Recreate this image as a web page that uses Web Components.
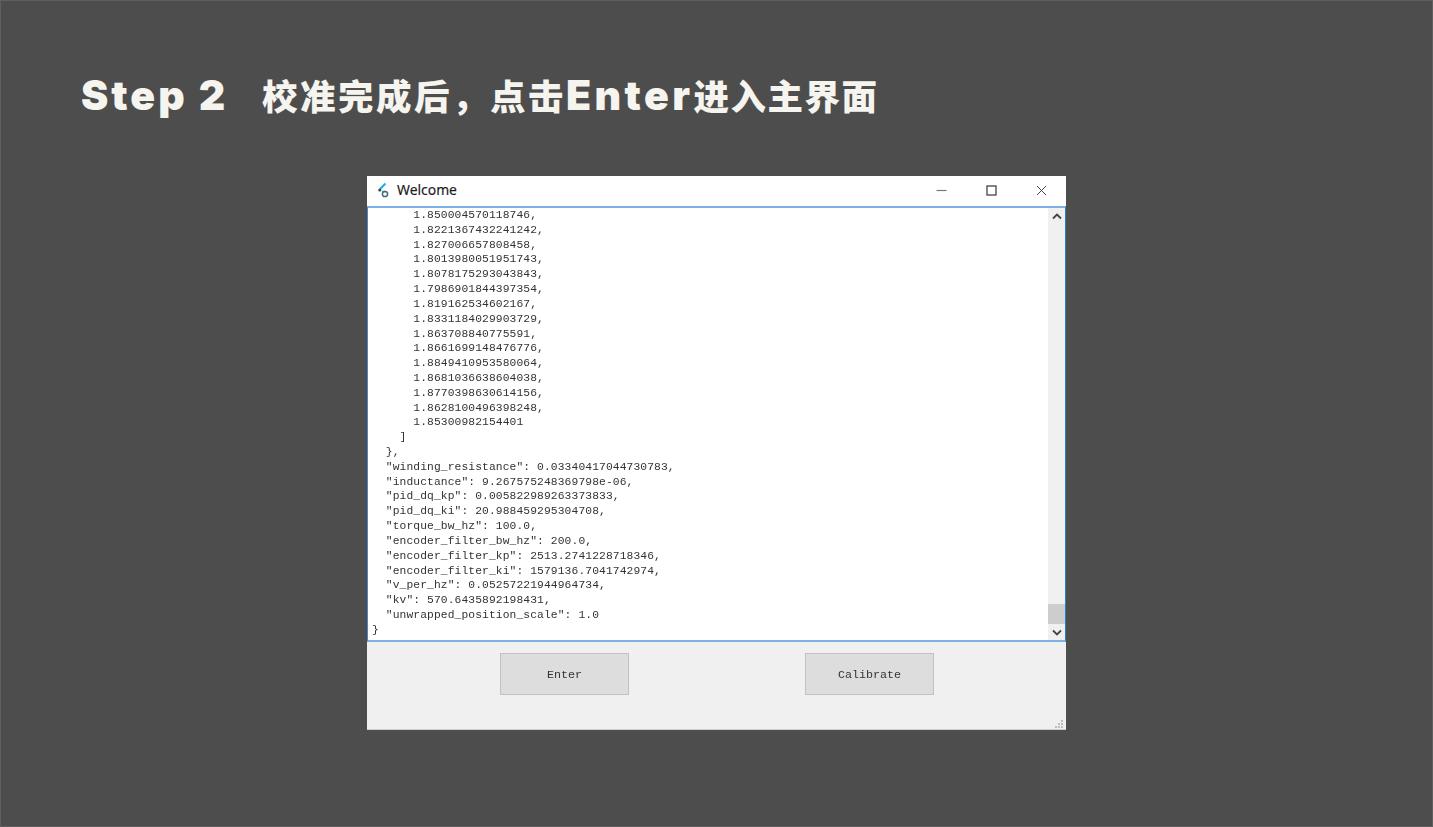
<!DOCTYPE html>
<html><head><meta charset="utf-8"><style>
html,body{margin:0;height:100%}
body{background:#4d4d4d}
</style></head><body>
<step-page></step-page>
<script>
const mono='"Liberation Mono","Noto Sans CJK SC",monospace';
class StepPage extends HTMLElement{constructor(){super();this.attachShadow({mode:'open'}).innerHTML=`<style>
:host{display:flex;flex-direction:column;box-sizing:border-box;width:1433px;height:827px;border:1px solid #5f5f5f;background:#4d4d4d;overflow:hidden}
h1{margin:0;padding:72px 0 0 80px;height:103px;box-sizing:content-box;font:900 41px/44px Inter,"Noto Sans CJK SC",sans-serif;color:#f5f4ee;white-space:nowrap;display:flex;align-items:flex-start}
.s{letter-spacing:3px;width:181px}
.c{font-family:"Noto Sans CJK SC",sans-serif;font-weight:900;font-size:35.5px;letter-spacing:2.5px}
.c2{letter-spacing:1.5px}
.e{letter-spacing:3.4px}
section{padding-left:366px}
</style><h1><span class="s">Step 2</span><span class="c">校准完成后，点击</span><span class="e">Enter</span><span class="c c2">进入主界面</span></h1><section><app-window></app-window></section>`}}
class AppWindow extends HTMLElement{constructor(){super();this.attachShadow({mode:'open'}).innerHTML=`<style>
:host{display:flex;flex-direction:column;box-sizing:border-box;width:699px;height:554px;background:#f0f0f0;position:relative;border-bottom:1px solid #cfcfcf}
.bar{box-sizing:border-box;height:30px;padding:0 0 2px 10px;background:#fff;display:flex;align-items:center;flex:none;font:400 13.9px/16px "Noto Sans",sans-serif;color:#1a1a1a;-webkit-text-stroke:.15px #1a1a1a}
.bar svg.logo{margin-right:6px}
.sp{flex:1}
.ctl{width:50px;height:28px;display:flex;align-items:center;justify-content:center}
.btns{display:flex;justify-content:flex-start;padding:11px 0 0 133px;gap:176px}
</style>
<div class="bar"><svg class="logo" width="14" height="16" viewBox="0 0 14 16"><path d="M8.5 1.5L3 7" stroke="#18b4e6" stroke-width="2.2" fill="none"/><circle cx="2.8" cy="8" r="1.6" fill="#3a4a55"/><path d="M5 9.5L8.5 9.5" stroke="#18b4e6" stroke-width="1.4"/><circle cx="8" cy="12" r="2.6" fill="none" stroke="#4a6a7a" stroke-width="1.5"/></svg>Welcome<span class="sp"></span>
<span class="ctl"><svg width="11" height="11"><path d="M0.5 5.5H10.5" stroke="#777" stroke-width="1.2"/></svg></span>
<span class="ctl"><svg width="11" height="11"><rect x="1" y="1" width="9" height="9" fill="none" stroke="#444" stroke-width="1.3"/></svg></span>
<span class="ctl"><svg width="11" height="11"><path d="M1 1L10 10M10 1L1 10" stroke="#444" stroke-width="1"/></svg></span></div>
<log-view></log-view>
<div class="btns"><tk-button>Enter</tk-button><tk-button>Calibrate</tk-button></div>
<size-grip></size-grip>`}}
class LogView extends HTMLElement{constructor(){super();const t=`      1.850004570118746,
      1.8221367432241242,
      1.827006657808458,
      1.8013980051951743,
      1.8078175293043843,
      1.7986901844397354,
      1.819162534602167,
      1.8331184029903729,
      1.863708840775591,
      1.8661699148476776,
      1.8849410953580064,
      1.8681036638604038,
      1.8770398630614156,
      1.8628100496398248,
      1.85300982154401
    ]
  },
  "winding_resistance": 0.03340417044730783,
  "inductance": 9.267575248369798e-06,
  "pid_dq_kp": 0.005822989263373833,
  "pid_dq_ki": 20.988459295304708,
  "torque_bw_hz": 100.0,
  "encoder_filter_bw_hz": 200.0,
  "encoder_filter_kp": 2513.2741228718346,
  "encoder_filter_ki": 1579136.7041742974,
  "v_per_hz": 0.05257221944964734,
  "kv": 570.6435892198431,
  "unwrapped_position_scale": 1.0
}`;
this.attachShadow({mode:'open'}).innerHTML=`<style>
:host{display:flex;flex:none;height:436px;box-sizing:border-box;border:solid #7db1e4;border-width:2px 1px;border-left-color:#3f8ad0;border-right-color:#2f7fc8;background:#fff;overflow:hidden}
pre{flex:1;margin:0;padding:0 0 0 4px;font:11.3px/14.82px ${mono};letter-spacing:.1px;color:#333;filter:blur(.35px);overflow:hidden}
.sb{width:17px;flex:none;background:#f0f0f0;display:flex;flex-direction:column;align-items:center}
.ar{height:16px;width:17px;display:flex;align-items:center;justify-content:center;flex:none}
.tr{flex:1;display:flex;flex-direction:column;justify-content:flex-end;width:100%}
.th{height:20px;background:#cdcdcd;width:100%}
</style><pre>${t}</pre><div class="sb"><div class="ar"><svg width="10" height="7"><path d="M1 5.5L5 1.5L9 5.5" fill="none" stroke="#444" stroke-width="1.8"/></svg></div><div class="tr"><div class="th"></div></div><div class="ar"><svg width="10" height="7"><path d="M1 1.5L5 5.5L9 1.5" fill="none" stroke="#444" stroke-width="1.8"/></svg></div></div>`}}
class TkButton extends HTMLElement{constructor(){super();this.attachShadow({mode:'open'}).innerHTML=`<style>
:host{display:flex;align-items:center;justify-content:center;box-sizing:border-box;width:129px;height:42px;padding-top:1px;background:#dddddd;border:1px solid #c2c2c2;font:11.7px ${mono};color:#333}
span{filter:blur(.3px)}
</style><span><slot></slot></span>`}}
class SizeGrip extends HTMLElement{constructor(){super();this.attachShadow({mode:'open'}).innerHTML=`<style>
:host{position:absolute;right:3px;bottom:1px;width:8px;height:8px;display:block}
svg{display:block}
</style><svg width="8" height="8" fill="#bdbdbd"><rect x="6" y="0" width="2" height="2"/><rect x="3" y="3" width="2" height="2"/><rect x="6" y="3" width="2" height="2"/><rect x="0" y="6" width="2" height="2"/><rect x="3" y="6" width="2" height="2"/><rect x="6" y="6" width="2" height="2"/></svg>`}}
customElements.define('step-page',StepPage);customElements.define('app-window',AppWindow);customElements.define('log-view',LogView);customElements.define('tk-button',TkButton);customElements.define('size-grip',SizeGrip);
</script>
</body></html>
